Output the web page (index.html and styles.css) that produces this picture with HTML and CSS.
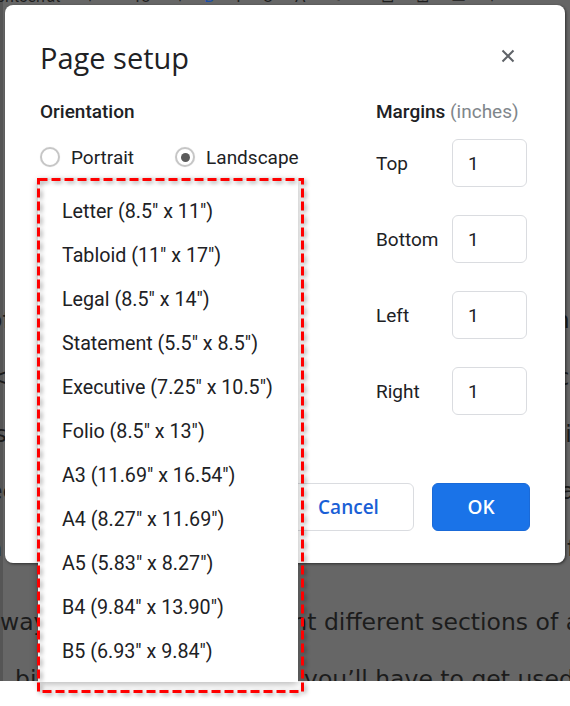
FILE: index.html
```html
<!DOCTYPE html>
<html lang="en">
<head>
<meta charset="utf-8">
<title>Page setup</title>
<link rel="stylesheet" href="styles.css">
</head>
<body>
<div class="stage">
  <div class="screen">
    <div class="toolbar">
      <span class="tb-item tb-font">Montserrat</span>
      <span class="tb-item tb-caret">▾</span>
      <span class="tb-item tb-size">18</span>
      <span class="tb-item tb-caret">▾</span>
      <span class="tb-item tb-icons">B</span>
      <span class="tb-item">I</span>
      <span class="tb-item">U</span>
      <span class="tb-item">A</span>
      <span class="tb-item">✎</span>
      <span class="tb-item tb-wide">⊟</span>
      <span class="tb-item">⊞</span>
      <span class="tb-item">▭</span>
      <span class="tb-item">▾</span>
    </div>
    <div class="doc">
      <div class="para">
        <div class="line frag"><span class="frag-l">of</span><span class="frag-r">the</span></div>
        <div class="line frag"><span class="frag-l">&lt;</span><span class="frag-r">ce</span></div>
        <div class="line frag"><span class="frag-l">is</span><span class="frag-r">is</span></div>
        <div class="line frag"><span class="frag-l">ee</span><span class="frag-r">at</span></div>
        <div class="line frag"><span class="frag-l">a</span><span class="frag-r">ft</span></div>
      </div>
      <div class="para">
        <div class="line">ways to frame and present different sections of a</div>
        <div class="line line-shift">bit different at first, and you’ll have to get used</div>
      </div>
    </div>

    <div class="dialog">
      <div class="dlg-head">
        <h1 class="dlg-title">Page setup</h1>
        <button class="close" aria-label="Close">
          <svg viewBox="0 0 14 14" width="14" height="14"><path d="M1.5 1.5L12.5 12.5M12.5 1.5L1.5 12.5"/></svg>
        </button>
      </div>
      <div class="dlg-body">
        <section class="col-orient">
          <h2 class="sec-title">Orientation</h2>
          <div class="radios">
            <label class="radio radio-first"><span class="ring"></span>Portrait</label>
            <label class="radio"><span class="ring ring-on"></span>Landscape</label>
          </div>
        </section>
        <section class="col-margins">
          <h2 class="sec-title">Margins <span class="unit">(inches)</span></h2>
          <div class="mrow"><span class="mlabel">Top</span><span class="mbox">1</span></div>
          <div class="mrow"><span class="mlabel">Bottom</span><span class="mbox">1</span></div>
          <div class="mrow"><span class="mlabel">Left</span><span class="mbox">1</span></div>
          <div class="mrow"><span class="mlabel">Right</span><span class="mbox">1</span></div>
        </section>
      </div>
      <div class="dlg-foot">
        <button class="btn btn-cancel">Cancel</button>
        <button class="btn btn-ok">OK</button>
      </div>
    </div>
  </div>

  <ul class="menu">
    <li>Letter (8.5" x 11")</li>
    <li>Tabloid (11" x 17")</li>
    <li>Legal (8.5" x 14")</li>
    <li>Statement (5.5" x 8.5")</li>
    <li>Executive (7.25" x 10.5")</li>
    <li>Folio (8.5" x 13")</li>
    <li>A3 (11.69" x 16.54")</li>
    <li>A4 (8.27" x 11.69")</li>
    <li>A5 (5.83" x 8.27")</li>
    <li>B4 (9.84" x 13.90")</li>
    <li>B5 (6.93" x 9.84")</li>
  </ul>

  <svg class="annot" width="270" height="517" viewBox="0 0 270 517">
    <rect x="2.5" y="2.5" width="264" height="512"/>
  </svg>
</div>
</body>
</html>
```

FILE: styles.css
```css
* { box-sizing: border-box; }

html, body {
  margin: 0;
  padding: 0;
  background: #ffffff;
}

.stage {
  position: relative;
  width: 570px;
  height: 706px;
  overflow: hidden;
}

.screen {
  position: relative;
  width: 570px;
  height: 681px;
  background: #666666;
  overflow: hidden;
  display: flex;
  flex-direction: column;
  box-shadow: inset 3px 0 0 #555555;
}

/* ---------- toolbar fragment ---------- */
.toolbar {
  height: 5px;
  overflow: hidden;
  display: flex;
  align-items: flex-start;
  flex-shrink: 0;
  font-family: Roboto, "Liberation Sans", sans-serif;
  font-size: 16px;
  color: #1e1e1e;
}
.tb-item {
  display: block;
  margin-top: -13px;
  line-height: 20px;
  padding: 0 0 0 22px;
}
.tb-font { margin-left: -18px; padding-left: 0; }
.tb-caret { padding-left: 26px; }
.tb-size { padding-left: 38px; }
.tb-icons { padding-left: 20px; color: #1a4fa8; }
.tb-wide { padding-left: 40px; }

/* ---------- background document ---------- */
.doc {
  padding-top: 286.5px;
  display: flex;
  flex-direction: column;
  gap: 17px;
  font-family: "DejaVu Sans", sans-serif;
  font-size: 23.5px;
  color: #1c1c1c;
}
.para { line-height: 57px; }
.line {
  white-space: nowrap;
  height: 57px;
}
.line-shift { margin-left: 15px; }

.frag {
  display: flex;
  justify-content: space-between;
}
.frag-l { margin-left: -12px; }
.frag-r { margin-right: -14px; }

/* ---------- dialog ---------- */
.dialog {
  position: absolute;
  left: 5px;
  top: 5px;
  width: 560px;
  height: 558px;
  background: #ffffff;
  border-radius: 8px;
  box-shadow: 1px 1px 3px rgba(0, 0, 0, 0.55);
  display: flex;
  flex-direction: column;
  padding: 0 35px 32px 35px;
  font-family: Roboto, "Liberation Sans", sans-serif;
  color: #202124;
}

.dlg-head {
  height: 92px;
  padding-top: 35px;
  display: flex;
  justify-content: space-between;
  align-items: flex-start;
  flex-shrink: 0;
}
.dlg-title {
  margin: 0;
  font-family: "Open Sans", Roboto, sans-serif;
  font-weight: 400;
  font-size: 29px;
  line-height: 36px;
  color: #202124;
}
.close {
  width: 24px;
  height: 24px;
  margin: 4px 10px 0 0;
  padding: 5px;
  border: none;
  background: transparent;
  display: flex;
  align-items: center;
  justify-content: center;
}
.close svg { display: block; }
.close path {
  stroke: #5f6368;
  stroke-width: 2;
  fill: none;
}

.dlg-body {
  display: flex;
}
.col-orient { width: 336px; }
.col-margins { flex: 1; }

.sec-title {
  margin: 0;
  font-size: 19px;
  font-weight: 500;
  line-height: 30px;
  color: #202124;
}
.unit {
  font-weight: 400;
  color: #80868b;
}

.radios {
  margin-top: 18px;
  height: 24px;
  display: flex;
  align-items: center;
}
.radio {
  display: flex;
  align-items: center;
  gap: 11px;
  font-size: 19px;
  color: #202124;
}
.radio-first { margin-right: 41px; }
.ring {
  width: 20px;
  height: 20px;
  border-radius: 50%;
  border: 2px solid #c6c6c6;
  display: flex;
  align-items: center;
  justify-content: center;
  box-shadow: 0 0 1px rgba(0, 0, 0, 0.15);
}
.ring-on::after {
  content: "";
  width: 9px;
  height: 9px;
  border-radius: 50%;
  background: #5a5a5a;
}

.mrow {
  display: flex;
  align-items: center;
  height: 48px;
  margin-top: 28px;
}
.sec-title + .mrow { margin-top: 12px; }
.mlabel {
  width: 76px;
  font-size: 19px;
  color: #202124;
}
.mbox {
  width: 75px;
  height: 48px;
  border: 1px solid #dadce0;
  border-radius: 6px;
  padding-left: 15px;
  display: flex;
  align-items: center;
  font-size: 19px;
  color: #202124;
}

.dlg-foot {
  margin-top: auto;
  display: flex;
  justify-content: flex-end;
  gap: 18px;
}
.btn {
  height: 48px;
  border-radius: 6px;
  font-family: "Open Sans", Roboto, sans-serif;
  font-weight: 600;
  font-size: 19px;
  padding: 0;
}
.btn-cancel {
  width: 131px;
  background: #ffffff;
  border: 1px solid #dadce0;
  color: #1a5fd6;
}
.btn-ok {
  width: 98px;
  background: #1a73e8;
  border: 1px solid #1a6ad8;
  color: #ffffff;
}

/* ---------- dropdown menu ---------- */
.menu {
  position: absolute;
  left: 38px;
  top: 180px;
  width: 260px;
  margin: 0;
  padding: 10px 0 8px;
  list-style: none;
  background: #ffffff;
  box-shadow: 0 2px 8px rgba(0, 0, 0, 0.3);
  font-family: Roboto, "Liberation Sans", sans-serif;
  font-size: 19.7px;
  color: #202124;
}
.menu li {
  height: 44px;
  line-height: 44px;
  padding-left: 24px;
  white-space: nowrap;
}

/* ---------- annotation ---------- */
.annot {
  position: absolute;
  left: 36px;
  top: 177px;
  overflow: visible;
  filter: drop-shadow(2px 2px 2px rgba(0, 0, 0, 0.35));
}
.annot rect {
  fill: none;
  stroke: #ff0000;
  stroke-width: 3;
  stroke-dasharray: 9 4;
}
```
